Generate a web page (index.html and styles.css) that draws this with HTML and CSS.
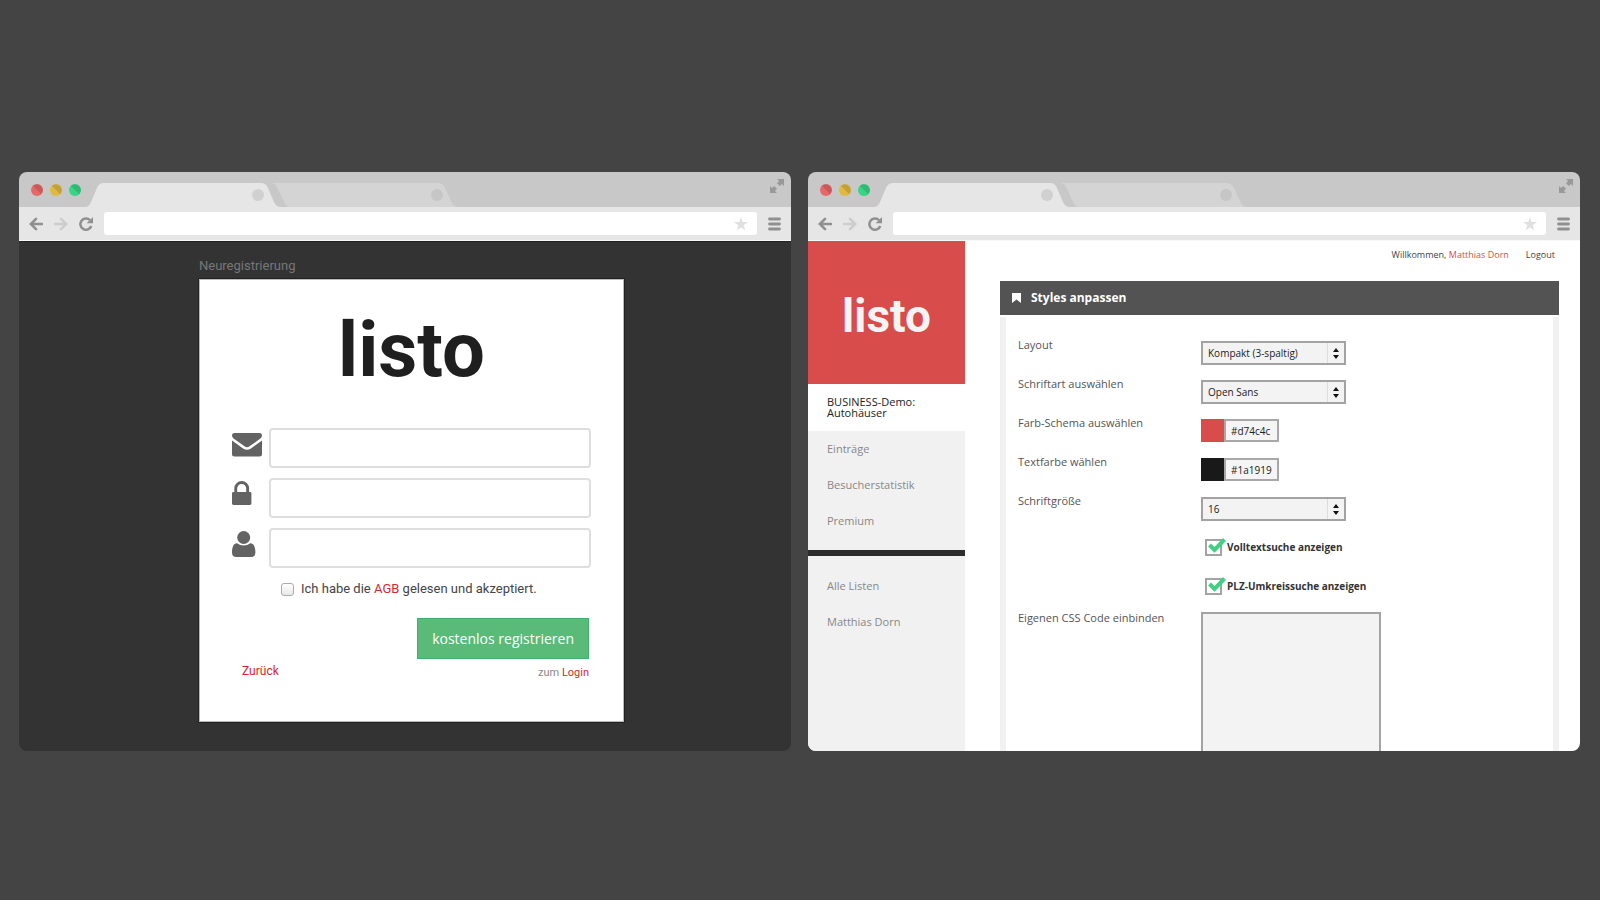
FILE: index.html
```html
<!DOCTYPE html>
<html lang="de">
<head>
<meta charset="utf-8">
<title>listo</title>
<link rel="stylesheet" href="styles.css">
</head>
<body>
<svg class="sprite" aria-hidden="true">
  <symbol id="tabs" viewBox="0 0 374 24">
    <path class="tab-back" d="M186 0H352Q358 0 360 5L367 20Q369 24 374 24H186Z"/>
    <path class="tab-gap" d="M176 0H186Q190 0 192 4L199 19Q201 24 205 24H176Z"/>
    <path class="tab-front" d="M0 24Q4 24 6 19L12 5Q14 0 19 0H176Q181 0 183 5L189 19Q191 24 196 24Z"/>
    <circle class="tab-dot" cx="173" cy="12" r="6"/>
    <circle class="tab-dot-back" cx="352" cy="12" r="6"/>
  </symbol>
  <symbol id="dot" viewBox="0 0 12 12">
    <circle cx="6" cy="6" r="6" fill="currentColor"/>
    <path d="M1.76 1.76A6 6 0 0 1 10.24 10.24Z" fill="#000" opacity=".13"/>
  </symbol>
  <symbol id="expand" viewBox="0 0 14 14">
    <path d="M7 0H14V7L11.900 4.900 9.800 7 7 4.200 9.100 2.100ZM0 7 2.100 9.100 4.200 7 7 9.800 4.900 11.900 7 14H0Z" fill="currentColor"/>
  </symbol>
  <symbol id="back" viewBox="0 0 14 14">
    <path d="M13 7H2M7 1.800 1.800 7 7 12.200" fill="none" stroke="currentColor" stroke-width="2.600" stroke-linecap="round"/>
  </symbol>
  <symbol id="forward" viewBox="0 0 14 14">
    <path d="M1 7H12M7 1.800 12.200 7 7 12.200" fill="none" stroke="currentColor" stroke-width="2.600" stroke-linecap="round"/>
  </symbol>
  <symbol id="reload" viewBox="0 0 14 14">
    <path d="M11 3.200A5.600 5.600 0 1 0 12.300 9" fill="none" stroke="currentColor" stroke-width="2.500"/>
    <path d="M14 0V6.300H7.700Z" fill="currentColor"/>
  </symbol>
  <symbol id="star" viewBox="0 0 14 14">
    <path d="M7 0 8.700 5.100H14L9.700 8.300 11.300 13.500 7 10.300 2.700 13.500 4.300 8.300 0 5.100H5.300Z" fill="currentColor"/>
  </symbol>
  <symbol id="menu" viewBox="0 0 14 14">
    <path d="M1.500 2H11.500M1.500 7H11.500M1.500 12H11.500" stroke="currentColor" stroke-width="2.800" stroke-linecap="round"/>
  </symbol>
</svg>

<main class="stage">
  <section class="window" aria-label="Neuregistrierung">
    <header class="tabstrip">
      <svg class="dot red"><use href="#dot"/></svg>
      <svg class="dot yellow"><use href="#dot"/></svg>
      <svg class="dot green"><use href="#dot"/></svg>
      <svg class="tabs"><use href="#tabs"/></svg>
      <svg class="expand"><use href="#expand"/></svg>
    </header>
    <div class="toolbar">
      <button class="tool" aria-label="Zurück"><svg><use href="#back"/></svg></button>
      <button class="tool off" aria-label="Vor"><svg><use href="#forward"/></svg></button>
      <button class="tool" aria-label="Neu laden"><svg><use href="#reload"/></svg></button>
      <div class="address"><input type="text" aria-label="Adresse"><svg><use href="#star"/></svg></div>
      <button class="tool" aria-label="Menü"><svg><use href="#menu"/></svg></button>
    </div>
    <div class="view dark">
      <div class="signup">
        <h1 class="signup-title">Neuregistrierung</h1>
        <form class="card">
          <div class="logo">listo</div>
          <div class="fields">
            <label class="field">
              <svg class="field-icon" viewBox="0 0 30 27"><path d="M2.500 2H27.500Q30 2 30 4.500C30 6.200 28.500 7.500 27 8.600L17.500 15.300Q15 17 12.500 15.300L3 8.600C1.500 7.500 0 6.200 0 4.500Q0 2 2.500 2ZM0 9.500 11 17.500Q15 20.200 19 17.500L30 9.500V23Q30 25.500 27.500 25.500H2.500Q0 25.500 0 23Z"/></svg>
              <input type="email" aria-label="E-Mail">
            </label>
            <label class="field">
              <svg class="field-icon" viewBox="0 0 30 27"><path d="M2.300 11V7.500A7.400 7.400 0 0 1 17.100 7.500V11H18Q19.400 11 19.400 12.400V22.600Q19.400 24 18 24H1.400Q0 24 0 22.600V12.400Q0 11 1.400 11ZM5.200 11H14.200V7.500A4.500 4.500 0 0 0 5.200 7.500Z"/></svg>
              <input type="password" aria-label="Passwort">
            </label>
            <label class="field">
              <svg class="field-icon" viewBox="0 0 30 27"><circle cx="11.700" cy="6.500" r="6.500"/><path d="M5 12.200Q11.700 16.800 18.400 12.200C22 12.200 23.400 16.500 23.400 21.500Q23.400 26 19 26H4.500Q0 26 0 21.500C0 16.500 1.400 12.200 5 12.200Z"/></svg>
              <input type="text" aria-label="Name">
            </label>
          </div>
          <div class="terms">
            <input type="checkbox" id="terms">
            <label for="terms">Ich habe die <a href="#agb">AGB</a> gelesen und akzeptiert.</label>
          </div>
          <button class="submit" type="submit">kostenlos registrieren</button>
          <div class="links">
            <a href="#back">Zurück</a>
            <span class="login">zum <a href="#login">Login</a></span>
          </div>
        </form>
      </div>
    </div>
  </section>

  <section class="window" aria-label="Styles anpassen">
    <header class="tabstrip">
      <svg class="dot red"><use href="#dot"/></svg>
      <svg class="dot yellow"><use href="#dot"/></svg>
      <svg class="dot green"><use href="#dot"/></svg>
      <svg class="tabs"><use href="#tabs"/></svg>
      <svg class="expand"><use href="#expand"/></svg>
    </header>
    <div class="toolbar">
      <button class="tool" aria-label="Zurück"><svg><use href="#back"/></svg></button>
      <button class="tool off" aria-label="Vor"><svg><use href="#forward"/></svg></button>
      <button class="tool" aria-label="Neu laden"><svg><use href="#reload"/></svg></button>
      <div class="address"><input type="text" aria-label="Adresse"><svg><use href="#star"/></svg></div>
      <button class="tool" aria-label="Menü"><svg><use href="#menu"/></svg></button>
    </div>
    <div class="view admin">
      <aside class="sidebar">
        <div class="brand">listo</div>
        <nav>
          <a class="current" href="#demo">BUSINESS-Demo: Autohäuser</a>
          <div class="group">
            <a href="#entries">Einträge</a>
            <a href="#stats">Besucherstatistik</a>
            <a href="#premium">Premium</a>
          </div>
          <div class="group second">
            <a href="#lists">Alle Listen</a>
            <a href="#profile">Matthias Dorn</a>
          </div>
        </nav>
      </aside>
      <div class="main">
        <div class="userbar">
          <span>Willkommen, <a class="user" href="#user">Matthias Dorn</a></span>
          <a href="#logout">Logout</a>
        </div>
        <div class="panel">
          <h2 class="panel-head">
            <svg viewBox="0 0 9 10"><path d="M0 0H9V10L4.500 6.500 0 10Z" fill="#fff"/></svg>
            Styles anpassen
          </h2>
          <form class="panel-body">
            <div class="row">
              <label for="layout">Layout</label>
              <span class="select"><select id="layout"><option>Kompakt (3-spaltig)</option></select><svg viewBox="0 0 16 20"><path d="M5 9 8 5 11 9ZM5 12H11L8 16Z"/></svg></span>
            </div>
            <div class="row">
              <label for="font">Schriftart auswählen</label>
              <span class="select"><select id="font"><option>Open Sans</option></select><svg viewBox="0 0 16 20"><path d="M5 9 8 5 11 9ZM5 12H11L8 16Z"/></svg></span>
            </div>
            <div class="row">
              <label for="scheme">Farb-Schema auswählen</label>
              <span class="color"><i class="swatch scheme"></i><input id="scheme" type="text" value="#d74c4c"></span>
            </div>
            <div class="row">
              <label for="textcolor">Textfarbe wählen</label>
              <span class="color"><i class="swatch ink"></i><input id="textcolor" type="text" value="#1a1919"></span>
            </div>
            <div class="row">
              <label for="size">Schriftgröße</label>
              <span class="select"><select id="size"><option>16</option></select><svg viewBox="0 0 16 20"><path d="M5 9 8 5 11 9ZM5 12H11L8 16Z"/></svg></span>
            </div>
            <div class="row">
              <label class="check"><input type="checkbox" checked><svg viewBox="0 0 18 16"><path d="M1.500 8 6.500 13 16.500 2.500" /></svg>Volltextsuche anzeigen</label>
            </div>
            <div class="row">
              <label class="check"><input type="checkbox" checked><svg viewBox="0 0 18 16"><path d="M1.500 8 6.500 13 16.500 2.500" /></svg>PLZ-Umkreissuche anzeigen</label>
            </div>
            <div class="row">
              <label for="css">Eigenen CSS Code einbinden</label>
              <textarea id="css"></textarea>
            </div>
          </form>
        </div>
      </div>
    </div>
  </section>
</main>
</body>
</html>
```

FILE: styles.css
```css
* { box-sizing: border-box; }

body {
  margin: 0;
  background: #444;
  font-family: "Open Sans", "Liberation Sans", sans-serif;
}

a { color: inherit; text-decoration: none; }
svg { display: block; flex: none; }
input, select, button, textarea { font: inherit; margin: 0; }
.sprite { position: absolute; width: 0; height: 0; }

.stage {
  display: grid;
  grid-template-columns: 1fr 1fr;
  gap: 17px;
  padding: 172px 20px 0 19px;
}

/* Browser frame */
.window {
  display: flex;
  flex-direction: column;
  min-width: 0;
  aspect-ratio: 4 / 3;
  border-radius: 8px;
  overflow: hidden;
}

.tabstrip {
  display: flex;
  align-items: flex-end;
  height: 35px;
  flex: none;
  padding: 0 7px 0 12px;
  background: #c8c8c8;
}

.dot { width: 12px; height: 12px; margin: 0 7px 11px 0; }
.red { color: #e86868; }
.yellow { color: #dfba41; }
.green { color: #37d586; }
.tabs { width: 374px; height: 24px; margin-left: -3px; }
.tab-front { fill: #e6e6e6; }
.tab-back { fill: #d4d4d4; }
.tab-gap { fill: #c8c8c8; }
.tab-dot { fill: #d0d0d0; }
.tab-dot-back { fill: #c6c6c6; }
.expand { width: 14px; height: 14px; margin: 0 0 14px auto; color: #999; }

.toolbar {
  display: flex;
  align-items: center;
  height: 34px;
  flex: none;
  gap: 11px;
  padding: 0 9px 0 10px;
  background: #e6e6e6;
  border-bottom: 1px solid #f8f8f8;
}

.tool { padding: 0; border: 0; background: none; color: #909090; }
.tool svg { width: 14px; height: 14px; }
.off { color: #cdcdcd; }

.address {
  display: flex;
  align-items: center;
  flex: 1;
  height: 23px;
  padding-right: 9px;
  background: #fff;
  border-radius: 3px;
  color: #e0e0e0;
}
.address input { flex: 1; min-width: 0; border: 0; background: none; outline: 0; }
.address svg { width: 14px; height: 14px; }

.view { flex: 1; min-height: 0; overflow: hidden; }

/* Registration */
.dark {
  padding: 16px 0 0 13px;
  background: #333;
  border-top: 1px solid #222;
  font-family: Roboto, "Liberation Sans", sans-serif;
}

.signup { max-width: 425px; margin: 0 auto; }
.signup-title { margin: 0 0 5px; font-size: 13px; line-height: 16px; font-weight: 400; color: #777; }

.card {
  display: flex;
  flex-direction: column;
  padding: 28px 32px 38px;
  background: #fff;
  border: 1px solid #bbb;
  outline: 1px solid #222;
}

.logo { font-size: 76px; line-height: 84px; font-weight: 700; color: #1f1f1f; text-align: center; }

.fields { display: grid; gap: 10px; margin-top: 36px; }
.field { display: flex; gap: 7px; }
.field-icon { width: 30px; height: 27px; margin-top: 3px; fill: #636363; }
.field input {
  flex: 1;
  min-width: 0;
  height: 40px;
  border: 2px solid #dedede;
  border-radius: 4px;
  background: #fff;
}

.terms { display: flex; align-items: center; gap: 7px; margin: 12px 0 0 49px; font-size: 13px; line-height: 18px; color: #444; }
.terms input {
  appearance: none;
  width: 13px;
  height: 13px;
  border: 1px solid #aaa;
  border-radius: 3px;
  background: linear-gradient(#fff, #e8e8e8);
}
.terms a, .links a { color: #d42a2a; }

.submit {
  align-self: flex-end;
  height: 41px;
  margin: 20px 2px 0 0;
  padding: 0 14px;
  border: 1px solid #42b068;
  background: #5aba78;
  color: #fff;
  font-family: "Open Sans", sans-serif;
  font-size: 14px;
}
.links { display: flex; justify-content: space-between; padding: 4px 2px 0 10px; font-size: 12px; line-height: 16px; }
.login { font-size: 11px; line-height: 20px; color: #888; }

/* Admin */
.admin { display: flex; background: #fff; }
.sidebar { display: flex; flex-direction: column; width: 157px; flex: none; background: #f1f1f1; }
.brand {
  height: 143px;
  padding-top: 4px;
  background: #d84d4b;
  color: #f4f4f4;
  font-family: Roboto, sans-serif;
  font-size: 46px;
  font-weight: 700;
  line-height: 143px;
  text-align: center;
}
.sidebar a { display: block; padding: 0 19px; font-size: 11px; line-height: 36px; color: #888; }
.sidebar .current { padding: 12px 19px 13px; background: #fff; line-height: 11px; color: #222; }
.group { padding-bottom: 11px; }
.second { padding-top: 12px; border-top: 6px solid #2d2d2d; }

.main { flex: 1; min-width: 0; padding: 0 21px 0 35px; }
.userbar { display: flex; justify-content: flex-end; gap: 17px; padding: 7px 4px 0 0; font-size: 9px; line-height: 14px; color: #444; }
.user { color: #d84d4b; }

.panel { margin-top: 19px; }
.panel-head {
  display: flex;
  align-items: center;
  gap: 10px;
  height: 34px;
  margin: 0 0 2px;
  padding: 0 0 1px 12px;
  background: #535353;
  color: #fff;
  font-size: 12px;
  font-weight: 700;
}
.panel-head svg { width: 9px; height: 10px; }

.panel-body {
  display: grid;
  gap: 11px;
  padding: 20px 12px;
  border: 6px solid #f1f1f1;
  border-width: 0 6px;
  font-size: 11px;
  line-height: 16px;
  color: #555;
}
.row { display: grid; grid-template-columns: 183px 1fr; min-height: 28px; align-items: start; }
.row > :not(label) { margin-top: 4px; }

.select { display: flex; width: 145px; height: 24px; border: 2px solid #a3a3a3; background: #f3f3f3; }
.select select {
  appearance: none;
  flex: 1;
  padding: 0 5px;
  border: 0;
  border-right: 1px solid #ddd;
  background: none;
  color: #222;
  font-size: 10px;
}
.select svg { width: 16px; height: 20px; fill: #111; }

.color { display: flex; height: 23px; }
.swatch { width: 23px; }
.scheme { background: #d84d4b; }
.ink { background: #1a1919; }
.color input { width: 55px; padding: 0 5px; border: 2px solid #a8a8a8; background: #f5f5f5; color: #222; font-size: 10px; }

.check { grid-column: 2; display: flex; align-items: center; height: 24px; margin: 3px 0 0 4px; color: #333; font-size: 10px; font-weight: 700; }
.check input { appearance: none; width: 17px; height: 17px; border: 2px solid #a3a3a3; background: #fff; }
.check svg { width: 18px; height: 16px; margin: -4px 1px 0 -14px; fill: none; stroke: #3fd083; stroke-width: 4; }

#css { width: 180px; height: 180px; margin-top: 2px; border: 2px solid #a3a3a3; background: #f3f3f3; resize: none; }
```
